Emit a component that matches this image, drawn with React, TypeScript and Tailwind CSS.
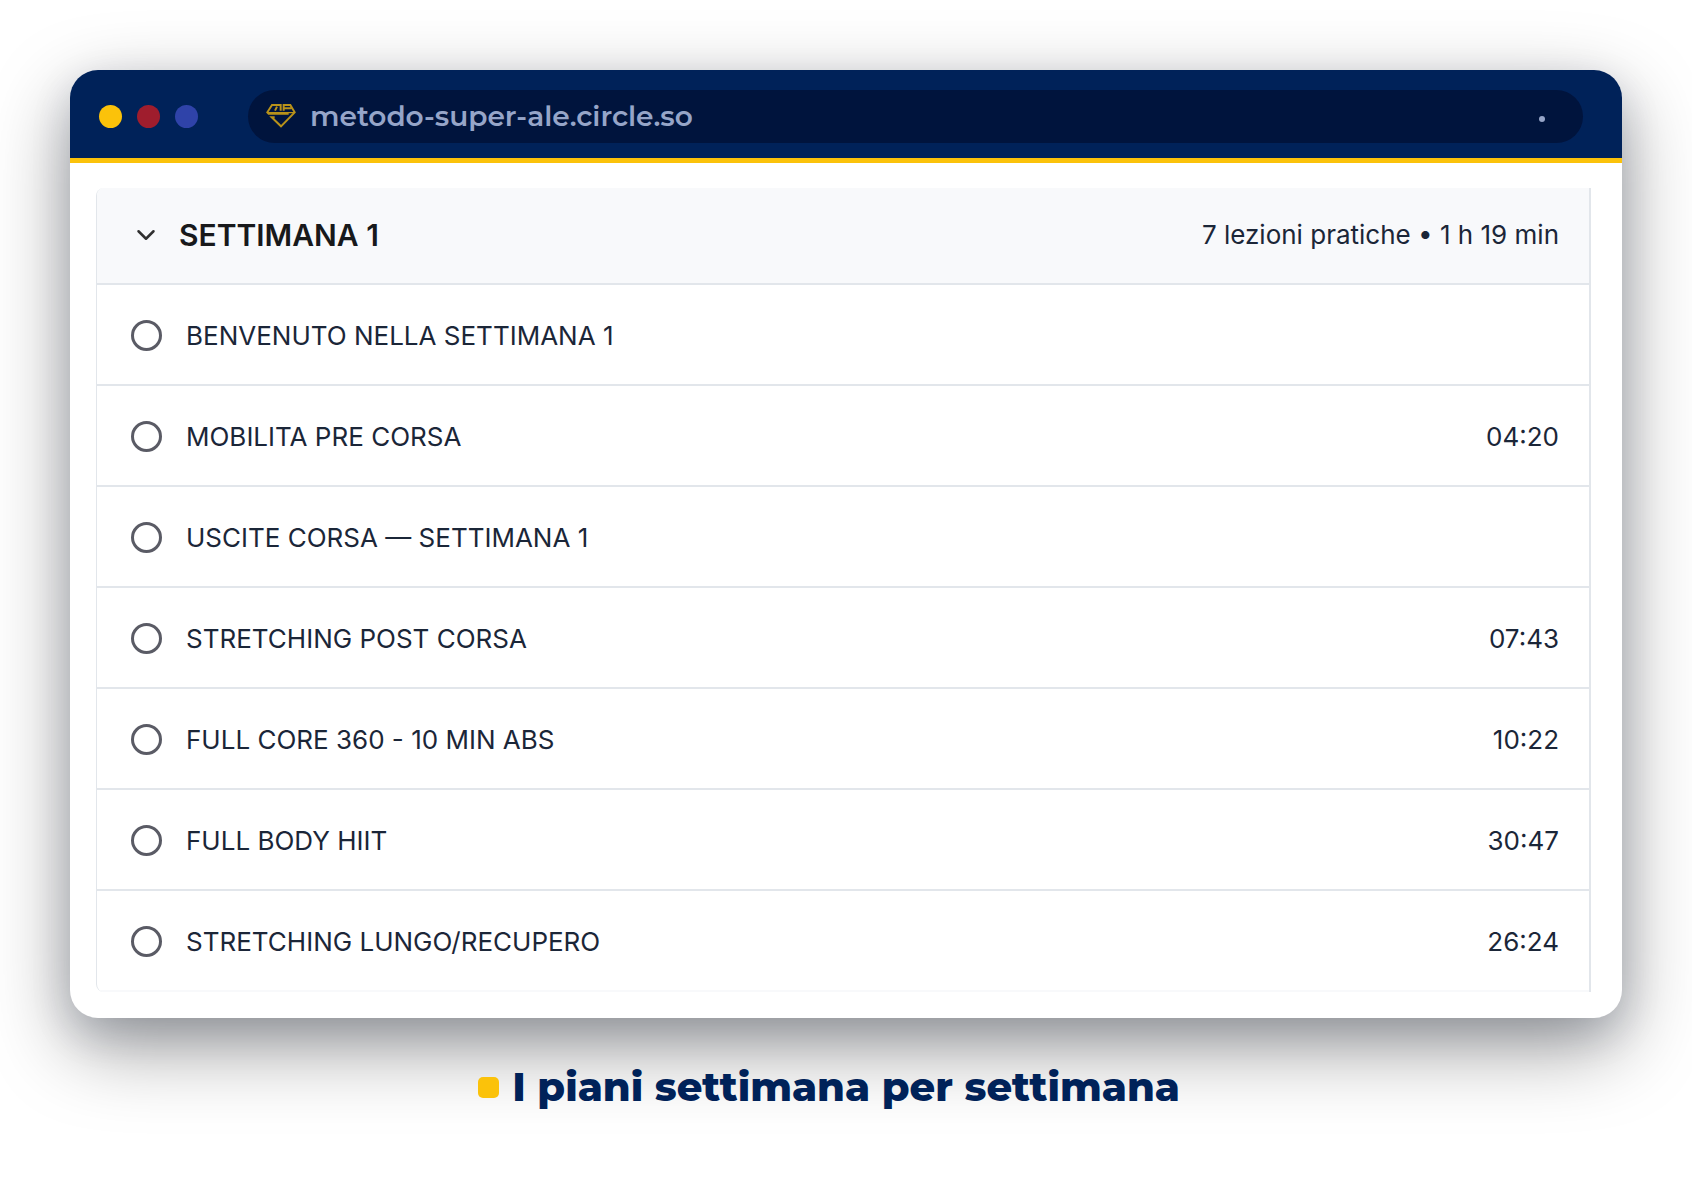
import { useState } from 'react';
import { ChevronDown } from 'lucide-react';

interface Lesson {
  id: string;
  title: string;
  duration?: string;
}

const lessons: Lesson[] = [
  { id: 'benvenuto', title: 'BENVENUTO NELLA SETTIMANA 1' },
  { id: 'mobilita', title: 'MOBILITA PRE CORSA', duration: '04:20' },
  { id: 'uscite', title: 'USCITE CORSA — SETTIMANA 1' },
  { id: 'stretching', title: 'STRETCHING POST CORSA', duration: '07:43' },
  { id: 'core', title: 'FULL CORE 360 - 10 MIN ABS', duration: '10:22' },
  { id: 'hiit', title: 'FULL BODY HIIT', duration: '30:47' },
  { id: 'recupero', title: 'STRETCHING LUNGO/RECUPERO', duration: '26:24' }
];

const DiamondLogo = () => (
  <svg viewBox="0 0 90 72" className="w-[30px] h-6 shrink-0" fill="none" stroke="#b8921a" strokeWidth="6" aria-hidden="true">
    <path d="M27 20L33 8M16 3H44V20M18 3L4 25L8 29H68" />
    <path d="M53 20V3H73L86 25L45 67L17 40H26M56 13H76" />
    <path d="M6 26H84" strokeWidth="4" />
  </svg>
);

const BrowserBar = () => (
  <header className="flex items-center gap-[50px] bg-[#002259] border-b-[5px] border-[#fbc20a] pt-5 pb-[15px] pl-[29px] pr-[39px]">
    <div className="flex gap-[15px]">
      <span className="size-[23px] rounded-full bg-[#fbc20a]" />
      <span className="size-[23px] rounded-full bg-[#9f1d2d]" />
      <span className="size-[23px] rounded-full bg-[#2f43a9]" />
    </div>
    <div className="flex flex-1 items-center h-[53px] rounded-full bg-[#00143d] pb-0.5 pl-[18px] pr-[38px]">
      <DiamondLogo />
      <input
        type="text"
        readOnly
        aria-label="Indirizzo"
        defaultValue="metodo-super-ale.circle.so"
        className="flex-1 min-w-0 ml-3.5 bg-transparent text-[28px] leading-9 font-semibold text-[#96a5c8] outline-none"
      />
      <span className="size-1.5 mt-1.5 rounded-full bg-[#96a5c8]" />
    </div>
  </header>
);

const App = () => {
  const [isOpen, setIsOpen] = useState(true);
  const [completed, setCompleted] = useState<string[]>([]);

  const toggleLesson = (id: string) => {
    setCompleted(prev => (prev.includes(id) ? prev.filter(l => l !== id) : [...prev, id]));
  };

  return (
    <main className="min-h-screen bg-white p-[70px] font-['Montserrat','Inter',sans-serif]">
      <section className="overflow-hidden rounded-[28px] bg-white shadow-[0_28px_80px_rgba(0,0,0,0.4),0_15px_40px_rgba(0,32,91,0.14)]">
        <BrowserBar />

        {/* Course section */}
        <div className="pt-[25px] pb-[26px] pl-[26px] pr-[31px] font-['Inter',sans-serif]">
          <div className="overflow-hidden rounded-l-lg border-l border-r-2 border-[#e2e6eb]">
            <button
              type="button"
              aria-expanded={isOpen}
              onClick={() => setIsOpen(!isOpen)}
              className="flex w-full items-center h-[97px] bg-[#f8f9fb] border-b-2 border-[#e2e6eb] pb-0.5 pl-[34px] pr-[30px] text-left"
            >
              <ChevronDown className="size-[30px] shrink-0 text-[#303030]" strokeWidth={2} />
              <span className="ml-[18px] flex-1 text-[30px] leading-9 font-semibold text-[#18191b]">SETTIMANA 1</span>
              <span className="text-[26px] leading-8 text-[#1b2638]">7 lezioni pratiche • 1 h 19 min</span>
            </button>

            {isOpen && (
              <ul>
                {lessons.map(lesson => (
                  <li key={lesson.id} className="border-b-2 border-[#e2e6eb] last:border-[#f8f9fb]">
                    <label className="flex items-center h-[99px] pt-0.5 pl-[34px] pr-[30px] text-[26px] leading-8 text-[#1b2638]">
                      <input
                        type="checkbox"
                        checked={completed.includes(lesson.id)}
                        onChange={() => toggleLesson(lesson.id)}
                        className="size-[31px] shrink-0 appearance-none rounded-full border-3 border-[#5a5b65] checked:bg-[#5a5b65]"
                      />
                      <span className="ml-6 flex-1">{lesson.title}</span>
                      {lesson.duration && <span>{lesson.duration}</span>}
                    </label>
                  </li>
                ))}
              </ul>
            )}
          </div>
        </div>
      </section>

      {/* Caption */}
      <div className="flex items-center justify-center gap-[13px] mt-11 pr-[34px]">
        <span className="size-[21px] shrink-0 rounded-[5px] bg-[#fbc20a]" />
        <h2 className="text-[40px] leading-[50px] font-extrabold text-[#002259]">I piani settimana per settimana</h2>
      </div>
    </main>
  );
};

export default App;
